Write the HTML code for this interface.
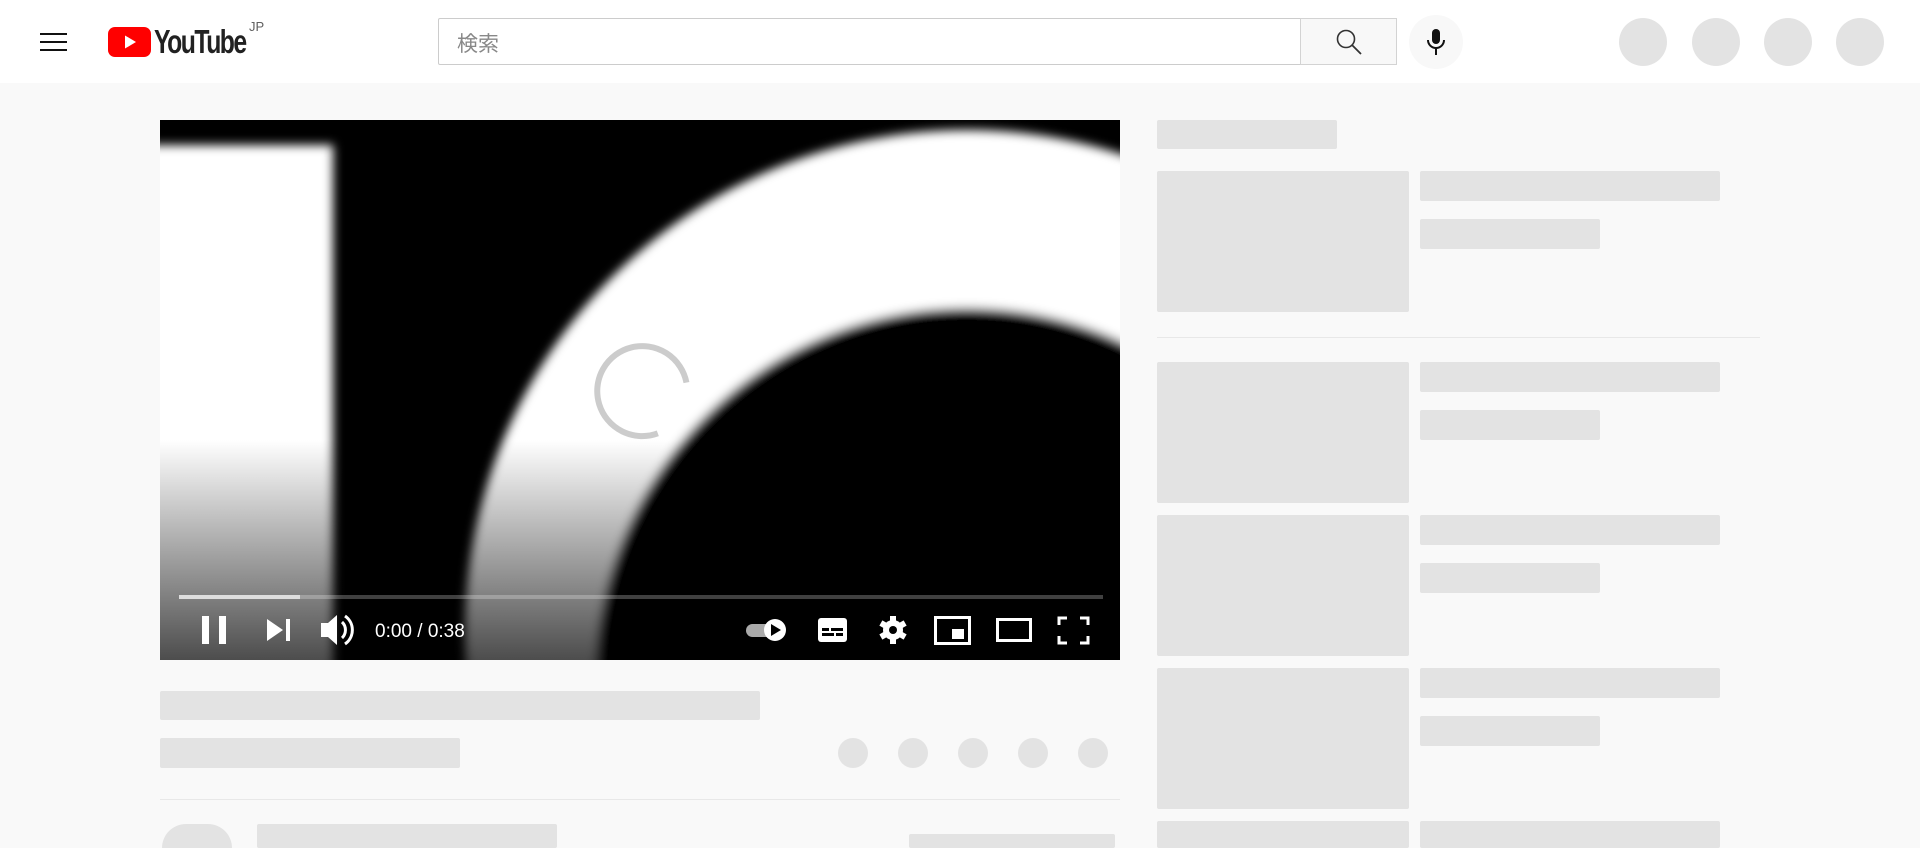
<!DOCTYPE html>
<html style="overflow:hidden;height:848px"><head><meta charset="utf-8"><style>
*{margin:0;padding:0;box-sizing:border-box}
html,body{overflow:hidden}
body{width:1920px;height:848px;background:#f9f9f9;font-family:"Liberation Sans","Noto Sans CJK JP",sans-serif;position:relative}
.a{position:absolute}
.g{position:absolute;background:#e3e3e3;border-radius:2px}
.c{position:absolute;background:#e3e3e3;border-radius:50%}
</style></head><body>
<div class="a" style="left:0;top:0;width:1920px;height:83px;background:#fff"></div>
<div class="a" style="left:40px;top:33px;width:27px;height:2px;background:#111"></div>
<div class="a" style="left:40px;top:41px;width:27px;height:2px;background:#111"></div>
<div class="a" style="left:40px;top:49px;width:27px;height:2px;background:#111"></div>
<svg class="a" style="left:108px;top:27px" width="43" height="30" viewBox="0 0 43 30"><rect width="43" height="30" rx="7" fill="#f00"/><path d="M17 8.5L28 15L17 21.5Z" fill="#fff"/></svg>
<div class="a" style="left:154px;top:22px;font-size:33px;font-weight:bold;letter-spacing:-2px;color:#212121;transform:scaleX(.75);transform-origin:left;line-height:40px">YouTube</div>
<div class="a" style="left:249px;top:19px;font-size:13px;color:#606060">JP</div>
<div class="a" style="left:438px;top:18px;width:863px;height:47px;border:1px solid #ccc;border-radius:2px 0 0 2px;background:#fff"></div>
<div class="a" style="left:457px;top:28px;font-size:21px;color:#888">検索</div>
<div class="a" style="left:1300px;top:18px;width:97px;height:47px;border:1px solid #d3d3d3;background:#f8f8f8"></div>
<svg class="a" style="left:1335px;top:28px" width="28" height="28" viewBox="0 0 28 28"><circle cx="11" cy="11" r="8.5" fill="none" stroke="#333" stroke-width="1.6"/><path d="M17 17L26 26" stroke="#333" stroke-width="1.8"/></svg>
<div class="a" style="left:1409px;top:15px;width:54px;height:54px;border-radius:50%;background:#f8f8f8"></div>
<svg class="a" style="left:1424px;top:28px" width="24" height="28" viewBox="0 0 24 28"><rect x="8" y="1" width="8" height="15" rx="4" fill="#111"/><path d="M4 12a8 8 0 0 0 16 0" fill="none" stroke="#111" stroke-width="2"/><path d="M12 20v7" stroke="#111" stroke-width="2"/></svg>
<div class="c" style="left:1619px;top:18px;width:48px;height:48px"></div>
<div class="c" style="left:1692px;top:18px;width:48px;height:48px"></div>
<div class="c" style="left:1764px;top:18px;width:48px;height:48px"></div>
<div class="c" style="left:1836px;top:18px;width:48px;height:48px"></div>

<svg class="a" style="left:160px;top:120px" width="960" height="540" viewBox="0 0 960 540">
<defs><filter id="b"><feGaussianBlur stdDeviation="5"/></filter>
<linearGradient id="gr" x1="0" y1="0" x2="0" y2="1"><stop offset="0" stop-color="#000" stop-opacity="0"/><stop offset="1" stop-color="#000" stop-opacity=".7"/></linearGradient>
<clipPath id="cp"><rect width="960" height="540"/></clipPath></defs>
<rect width="960" height="540" fill="#000"/>
<g clip-path="url(#cp)" filter="url(#b)">
<rect x="-20" y="25" width="193" height="600" fill="#fff"/>
<circle cx="807" cy="512" r="502" fill="#fff"/>
<circle cx="807" cy="560" r="372" fill="#000"/>
</g>
<rect y="320" width="960" height="220" fill="url(#gr)"/>
<path d="M527 269A45 45 0 1 0 490 314" fill="none" stroke="#ccc" stroke-width="6" transform="rotate(-10 490 269)"/>
<rect x="19" y="475" width="924" height="4" fill="rgba(255,255,255,.25)"/>
<rect x="19" y="475" width="121" height="4" fill="#ddd"/>
<rect x="42" y="496" width="7" height="28" fill="#fff"/><rect x="59" y="496" width="7" height="28" fill="#fff"/>
<path d="M107 499L123 510L107 521Z" fill="#fff"/><rect x="126" y="499" width="4" height="22" fill="#fff"/>
<path d="M161 503h7l9-8v30l-9-8h-7Z" fill="#fff"/><path d="M182 502a11 11 0 0 1 0 16M185 496a17 17 0 0 1 0 28" fill="none" stroke="#fff" stroke-width="3"/>
<text x="215" y="517" font-size="19" fill="#fff" font-family="Liberation Sans">0:00 / 0:38</text>
<rect x="586" y="504" width="30" height="13" rx="6.5" fill="#aaa"/><circle cx="615" cy="510" r="11" fill="#fff"/><path d="M611 504L621 510L611 516Z" fill="#000"/>
<rect x="658" y="498" width="29" height="24" rx="3" fill="#fff"/><rect x="662" y="508" width="7" height="3" fill="#000"/><rect x="671" y="508" width="12" height="3" fill="#000"/><rect x="662" y="513" width="12" height="3" fill="#000"/><rect x="676" y="513" width="7" height="3" fill="#000"/>
<g transform="translate(733 510)"><circle r="10" fill="#fff"/><g fill="#fff"><rect x="-3" y="-14" width="6" height="28"/><rect x="-3" y="-14" width="6" height="28" transform="rotate(60)"/><rect x="-3" y="-14" width="6" height="28" transform="rotate(120)"/></g><circle r="4" fill="#000"/></g>
<rect x="775.5" y="497.5" width="34" height="26" fill="none" stroke="#fff" stroke-width="3"/><rect x="792" y="509" width="12" height="10" fill="#fff"/>
<rect x="837.5" y="499.5" width="33" height="21" fill="none" stroke="#fff" stroke-width="3"/>
<path d="M899 505v-7h8M920 498h8v7M928 516v7h-8M907 523h-8v-7" fill="none" stroke="#fff" stroke-width="3"/>
</svg>

<div class="g" style="left:160px;top:691px;width:600px;height:29px"></div>
<div class="g" style="left:160px;top:738px;width:300px;height:30px"></div>
<div class="c" style="left:838px;top:738px;width:30px;height:30px"></div>
<div class="c" style="left:898px;top:738px;width:30px;height:30px"></div>
<div class="c" style="left:958px;top:738px;width:30px;height:30px"></div>
<div class="c" style="left:1018px;top:738px;width:30px;height:30px"></div>
<div class="c" style="left:1078px;top:738px;width:30px;height:30px"></div>
<div class="a" style="left:160px;top:799px;width:960px;height:1px;background:#e8e8e8"></div>
<div class="c" style="left:162px;top:824px;width:70px;height:24px;border-radius:35px 35px 0 0"></div>
<div class="g" style="left:257px;top:824px;width:300px;height:24px"></div>
<div class="g" style="left:909px;top:834px;width:206px;height:14px"></div>

<div class="g" style="left:1157px;top:120px;width:180px;height:29px"></div>
<div class="g" style="left:1157px;top:171px;width:252px;height:141px"></div>
<div class="g" style="left:1420px;top:171px;width:300px;height:30px"></div>
<div class="g" style="left:1420px;top:219px;width:180px;height:30px"></div>
<div class="a" style="left:1157px;top:337px;width:603px;height:1px;background:#e8e8e8"></div>
<div class="g" style="left:1157px;top:362px;width:252px;height:141px"></div>
<div class="g" style="left:1420px;top:362px;width:300px;height:30px"></div>
<div class="g" style="left:1420px;top:410px;width:180px;height:30px"></div>
<div class="g" style="left:1157px;top:515px;width:252px;height:141px"></div>
<div class="g" style="left:1420px;top:515px;width:300px;height:30px"></div>
<div class="g" style="left:1420px;top:563px;width:180px;height:30px"></div>
<div class="g" style="left:1157px;top:668px;width:252px;height:141px"></div>
<div class="g" style="left:1420px;top:668px;width:300px;height:30px"></div>
<div class="g" style="left:1420px;top:716px;width:180px;height:30px"></div>
<div class="g" style="left:1157px;top:821px;width:252px;height:27px"></div>
<div class="g" style="left:1420px;top:821px;width:300px;height:27px"></div>
</body></html>
